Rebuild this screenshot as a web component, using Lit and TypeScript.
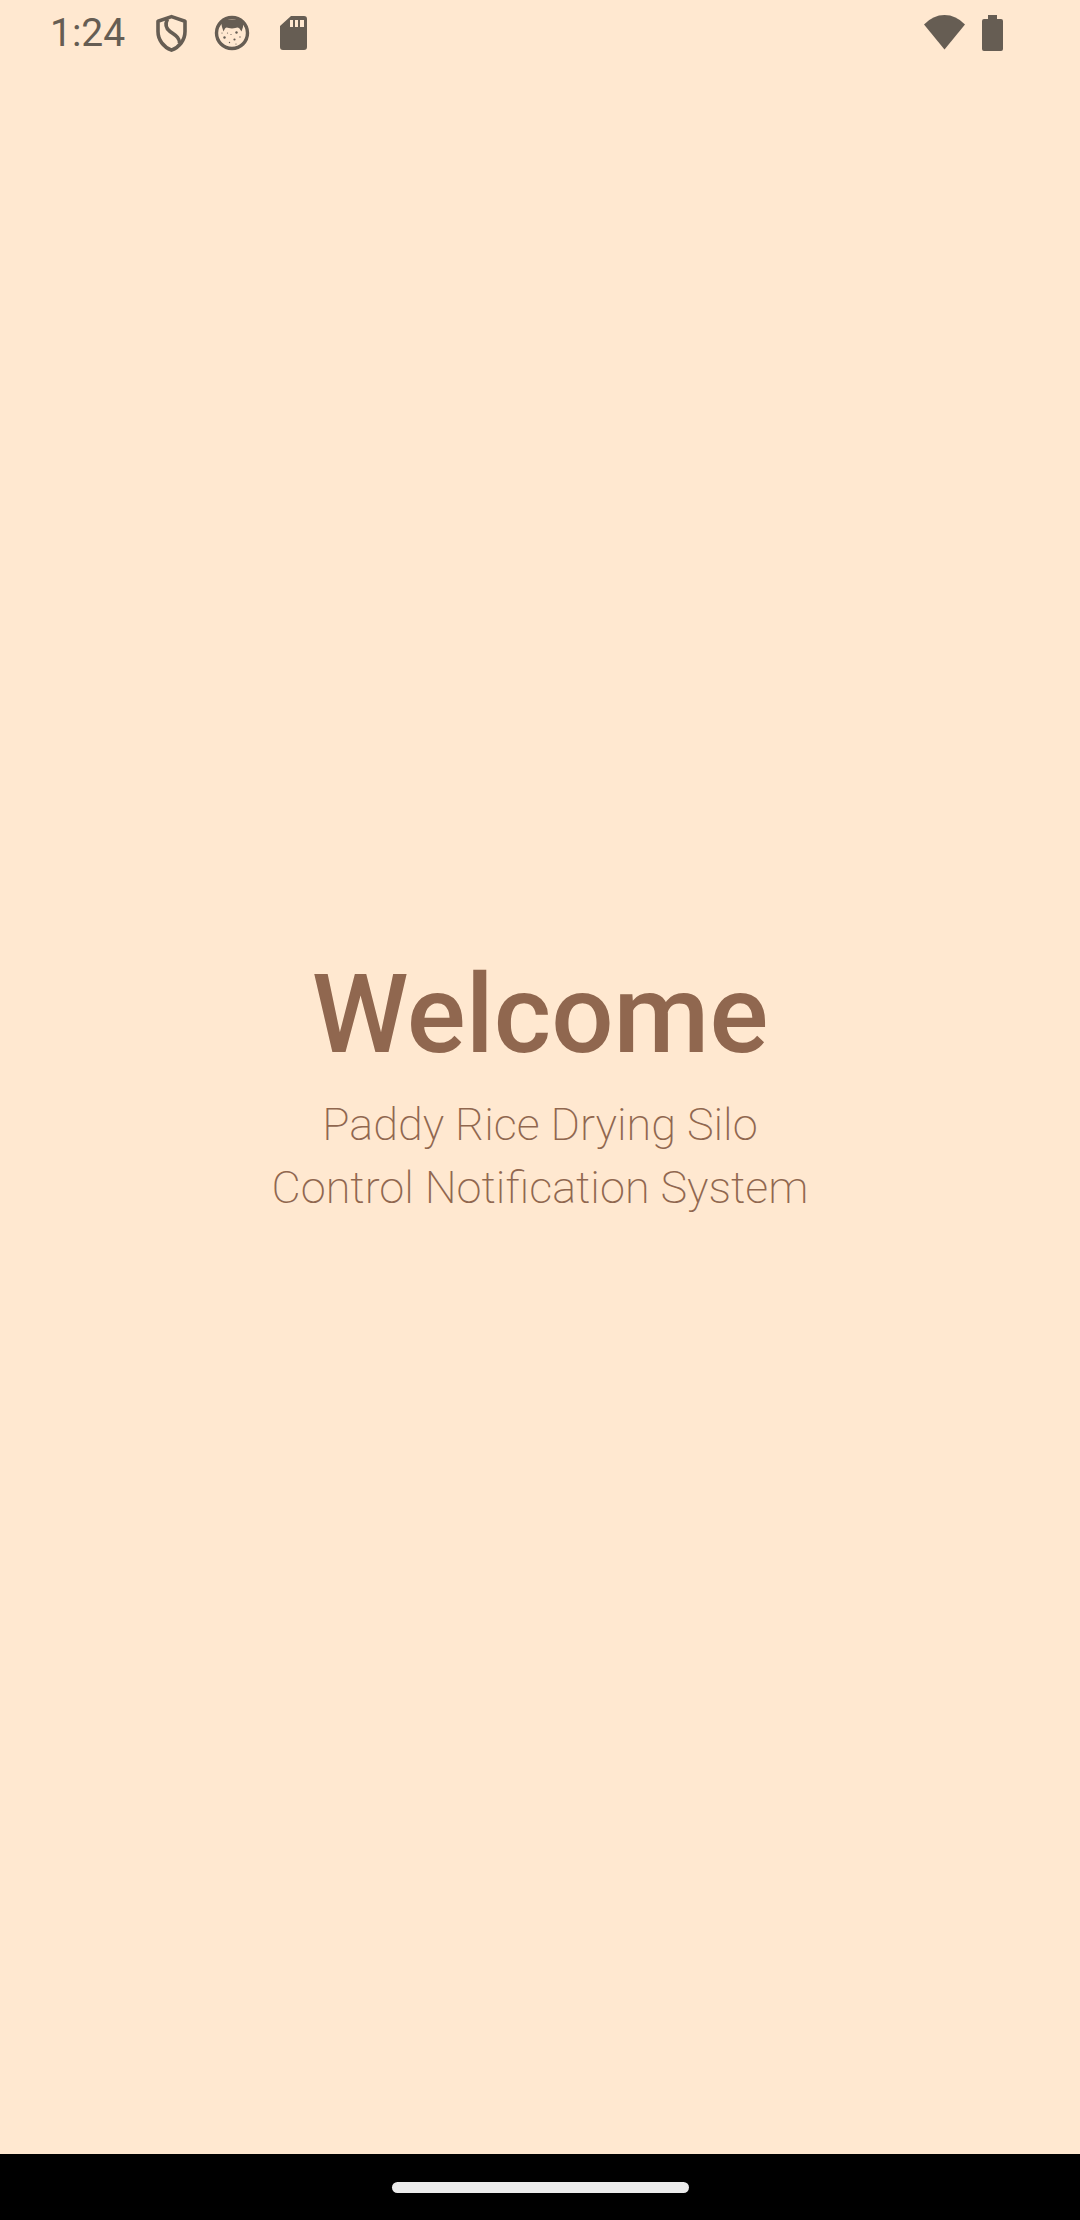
import { LitElement, html, css } from "lit";
import { customElement, property } from "lit/decorators.js";

@customElement("status-bar")
export class StatusBar extends LitElement {
  @property() time = "1:24";

  static styles = css`
    :host {
      display: flex;
      align-items: center;
      justify-content: space-between;
      box-sizing: border-box;
      height: 66px;
      padding: 0 74px 0 50px;
      color: #665d53;
    }
    .group {
      display: flex;
      align-items: center;
      gap: 20px;
    }
    .system {
      gap: 14px;
    }
    .clock {
      margin-right: 7px;
      font-size: 39px;
      line-height: 46px;
    }
    svg {
      display: block;
      fill: currentColor;
    }
  `;

  render() {
    return html`
      <div class="group">
        <time class="clock">${this.time}</time>
        <svg width="40" height="40" viewBox="0 0 40 40" aria-hidden="true">
          <path d="M19.5 3.6 33 8.200V18.500C33 27 27.500 34 19.500 37.200 11.500 34 6 27 6 18.500V8.200Z" fill="none" stroke="currentColor" stroke-width="3.600" stroke-linejoin="round" />
          <path d="M15.500 6C13 11 14 15.500 18 18.500 23 22.200 27.500 24 27.500 30" fill="none" stroke="currentColor" stroke-width="3.600" />
        </svg>
        <svg width="40" height="40" viewBox="0 0 40 40" aria-hidden="true">
          <circle cx="20" cy="20" r="15.500" fill="none" stroke="currentColor" stroke-width="3.400" />
          <path d="M9 9 12 6.500H28L31 9V14L29.500 18.500 27.500 15.500C25 13.500 24 15.500 20 15.500S15 13.500 13 15.500L11.500 18.500 10 14Z" />
          <circle cx="24.500" cy="19.500" r="1.200" />
          <circle cx="12.500" cy="24.500" r="1.200" />
          <circle cx="22.500" cy="26.500" r="1.100" />
          <circle cx="15.500" cy="20" r="0.600" />
          <circle cx="19" cy="21.500" r="0.600" />
          <circle cx="17.500" cy="29.500" r="0.700" />
          <circle cx="28" cy="24" r="0.700" />
          <circle cx="24" cy="31" r="0.600" />
          <circle cx="10" cy="20" r="0.600" />
        </svg>
        <svg width="40" height="40" viewBox="0 0 40 40" aria-hidden="true">
          <path fill-rule="evenodd" d="M19 3H32Q35 3 35 6V34Q35 37 32 37H11Q8 37 8 34V13ZM18 7V14H21V7ZM23 7V14H26V7ZM28 7V14H32V7Z" />
        </svg>
      </div>
      <div class="group system">
        <svg width="42" height="40" viewBox="0 0 42 40" aria-hidden="true">
          <path d="M0 11.500Q9 2 20.500 2T41 11.500L20.500 36.500Z" />
        </svg>
        <svg width="26" height="40" viewBox="0 0 26 40" aria-hidden="true">
          <path d="M8 2H17V6H21Q23 6 23 8V36Q23 38 21 38H4Q2 38 2 36V8Q2 6 4 6H8Z" />
        </svg>
      </div>
    `;
  }
}

@customElement("app-root")
export class AppRoot extends LitElement {
  static styles = css`
    :host {
      display: flex;
      flex-direction: column;
      min-height: 100vh;
      background: #ffe8d0;
      font-family: Roboto, "Liberation Sans", sans-serif;
    }
    main {
      flex: 1;
      display: flex;
      flex-direction: column;
      align-items: center;
      justify-content: center;
      gap: 14px;
      padding-bottom: 52px;
      color: #90674f;
      text-align: center;
    }
    h1 {
      margin: 0;
      font-size: 110px;
      font-weight: 500;
      line-height: 129px;
    }
    p {
      margin: 0;
      font-size: 45px;
      font-weight: 200;
      line-height: 63px;
    }
    .nav {
      display: flex;
      align-items: center;
      justify-content: center;
      height: 66px;
      background: #000;
    }
    .handle {
      width: 297px;
      height: 11px;
      border-radius: 6px;
      background: #ebebeb;
    }
  `;

  render() {
    return html`
      <status-bar></status-bar>
      <main>
        <h1>Welcome</h1>
        <p>Paddy Rice Drying Silo<br />Control Notification System</p>
      </main>
      <div class="nav"><div class="handle"></div></div>
    `;
  }
}
